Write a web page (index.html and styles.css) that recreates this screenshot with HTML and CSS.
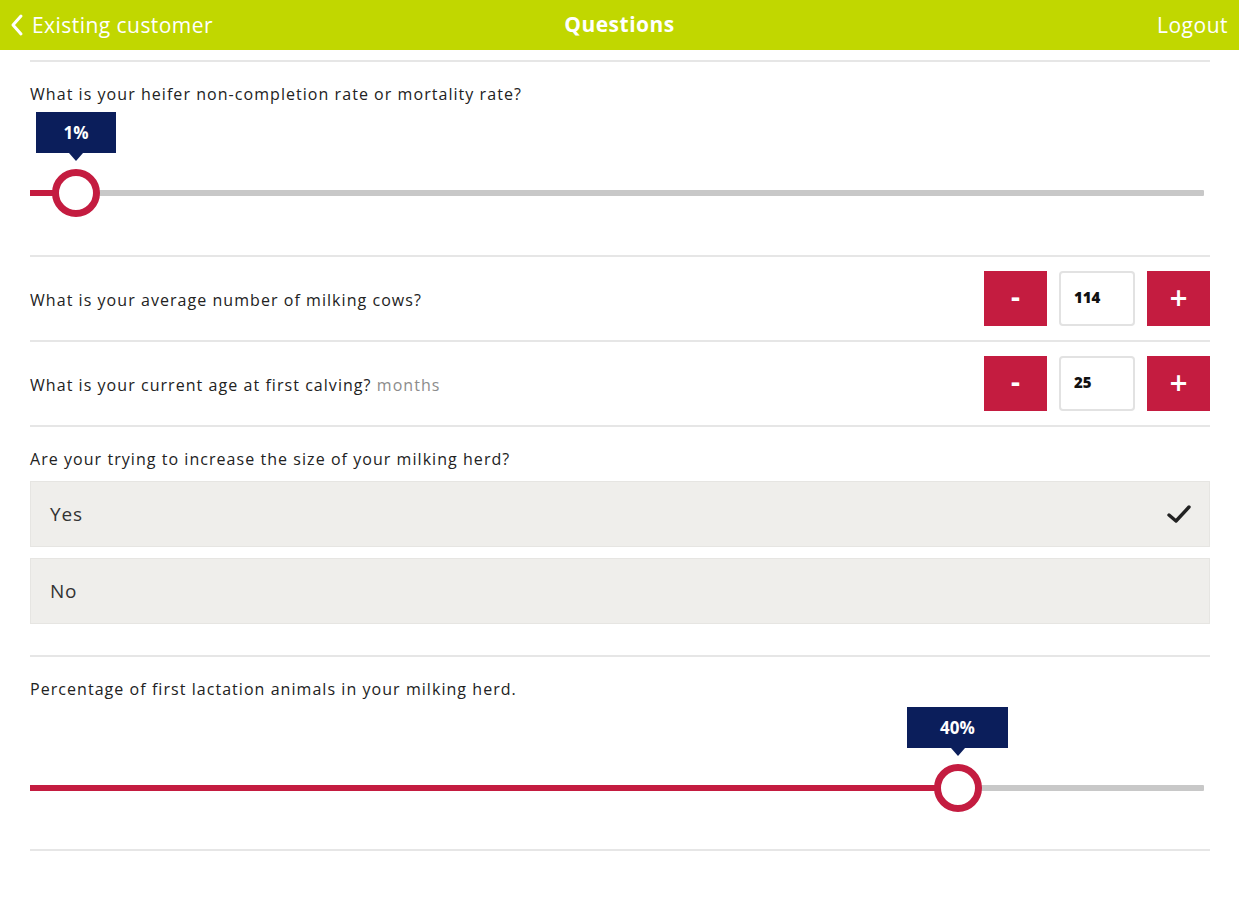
FILE: index.html
```html
<!DOCTYPE html>
<html lang="en">
<head>
<meta charset="utf-8">
<title>Questions</title>
<link rel="stylesheet" href="styles.css">
</head>
<body>
<header class="topbar">
  <a class="back">
    <svg class="chev" width="14" height="24" viewBox="0 0 14 24"><path d="M11 3 L3 12 L11 21" fill="none" stroke="#fff" stroke-width="3" stroke-linecap="round" stroke-linejoin="round"/></svg>
    <span>Existing customer</span>
  </a>
  <h1 class="title">Questions</h1>
  <a class="logout">Logout</a>
</header>
<main class="content">
  <section class="q q-slider">
    <p class="label">What is your heifer non-completion rate or mortality rate?</p>
    <div class="track">
      <div class="fill" style="width:46px"></div>
      <div class="tip tip-sm" style="left:46px">1%</div>
      <div class="thumb" style="left:46px"></div>
    </div>
  </section>
  <section class="q q-row">
    <p class="label">What is your average number of milking cows?</p>
    <div class="stepper">
      <button class="step">-</button>
      <div class="val">114</div>
      <button class="step">+</button>
    </div>
  </section>
  <section class="q q-row">
    <p class="label">What is your current age at first calving? <span class="unit">months</span></p>
    <div class="stepper">
      <button class="step">-</button>
      <div class="val">25</div>
      <button class="step">+</button>
    </div>
  </section>
  <section class="q q-choice">
    <p class="label">Are your trying to increase the size of your milking herd?</p>
    <div class="opt">
      <span>Yes</span>
      <svg class="check" width="26" height="22" viewBox="0 0 26 22"><path d="M3 12 L10 18 L23 4" fill="none" stroke="#222" stroke-width="3.4" stroke-linecap="round" stroke-linejoin="round"/></svg>
    </div>
    <div class="opt"><span>No</span></div>
  </section>
  <section class="q q-slider last">
    <p class="label">Percentage of first lactation animals in your milking herd.</p>
    <div class="track">
      <div class="fill" style="width:928px"></div>
      <div class="tip tip-lg" style="left:928px">40%</div>
      <div class="thumb" style="left:928px"></div>
    </div>
  </section>
</main>
</body>
</html>
```
FILE: styles.css
```css
* { box-sizing: border-box; }
html, body { margin: 0; padding: 0; background: #fff; }
body { font-family: "Open Sans", Lato, sans-serif; color: #222; }

.topbar {
  height: 50px;
  background: #c1d700;
  display: flex;
  align-items: center;
  justify-content: space-between;
  padding: 0 11px 0 10px;
  position: relative;
  color: #fff;
}
.back { display: flex; align-items: center; gap: 8px; font-size: 21px; letter-spacing: 0.45px; }
.chev { display: block; }
.title {
  position: absolute;
  left: 0; right: 0; top: 0;
  margin: 0;
  text-align: center;
  line-height: 48px;
  font-size: 21px;
  font-weight: 700;
  letter-spacing: 0.5px;
  pointer-events: none;
}
.logout { font-size: 21px; letter-spacing: 0.5px; }

.content { padding: 10px 29px 0 30px; }

.q { border-top: 2px solid #e6e6e6; }
.label { margin: 0; font-size: 16px; line-height: 20px; color: #222; letter-spacing: 1.05px; }
.unit { color: #8c8c8c; }

.q-slider { padding-top: 22px; padding-bottom: 59px; }
.q-slider.last { padding-bottom: 58px; border-bottom: 2px solid #e6e6e6; }
.track {
  position: relative;
  margin-top: 86px;
  width: 1174px;
  height: 6px;
  background: #c8c8c8;
  border-radius: 1px;
}
.fill { height: 6px; background: #c41c40; }
.thumb {
  position: absolute;
  top: -21px;
  width: 48px;
  height: 48px;
  margin-left: -24px;
  border: 7px solid #c41c40;
  border-radius: 50%;
  background: #fff;
}
.tip {
  position: absolute;
  top: -78px;
  height: 41px;
  background: #0b1e5b;
  color: #fff;
  font-weight: 700;
  font-size: 17px;
  line-height: 41px;
  text-align: center;
}
.tip::after {
  content: "";
  position: absolute;
  left: 50%;
  top: 41px;
  margin-left: -7px;
  border-left: 7px solid transparent;
  border-right: 7px solid transparent;
  border-top: 8px solid #0b1e5b;
}
.tip-sm { width: 80px; margin-left: -40px; }
.tip-lg { width: 101px; margin-left: -51px; }

.q-row {
  display: flex;
  align-items: center;
  justify-content: space-between;
  padding: 14px 0;
}
.q-row .label { padding-top: 2px; }
.stepper { display: flex; gap: 12px; }
.step {
  width: 63px;
  height: 55px;
  border: 0;
  padding: 0;
  background: #c41c40;
  color: #fff;
  font-family: "DejaVu Sans", sans-serif;
  font-weight: 700;
  font-size: 24px;
  line-height: 55px;
}
.val {
  width: 76px;
  height: 55px;
  border: 2px solid #e2e2e2;
  border-radius: 4px;
  padding: 14px 0 0 13px;
  font-size: 15px;
  font-weight: 800;
  line-height: 20px;
  color: #111;
}

.q-choice { padding: 22px 0 31px; }
.q-choice .label { margin-bottom: 12px; }
.opt {
  height: 66px;
  background: #efeeeb;
  border: 1px solid #e6e5e2;
  display: flex;
  align-items: center;
  justify-content: space-between;
  padding: 0 17px 0 19px;
  font-size: 19px;
  color: #333;
  letter-spacing: 0.8px;
}
.opt + .opt { margin-top: 11px; }
.check { display: block; }
```
